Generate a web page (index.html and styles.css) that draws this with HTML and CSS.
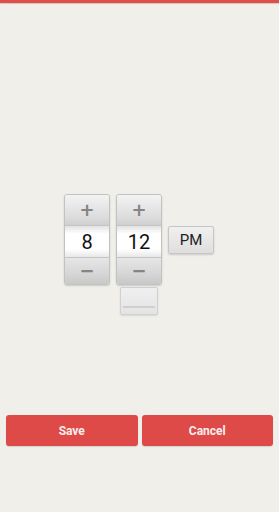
FILE: index.html
```html
<!DOCTYPE html>
<html>
<head>
    <meta charset="UTF-8">
    <meta name="viewport" content="width=device-width, initial-scale=1.0">
    <title>Set Time</title>
    <link rel="stylesheet" href="styles.css">
</head>
<body>
    <div class="top-bar"></div>

    <div class="stage">
        <div class="time-picker">
            <div class="column">
                <div class="spinner">
                    <button class="step step-up">+</button>
                    <div class="value">8</div>
                    <button class="step step-down">&minus;</button>
                </div>
            </div>
            <div class="column">
                <div class="spinner">
                    <button class="step step-up">+</button>
                    <div class="value">12</div>
                    <button class="step step-down">&minus;</button>
                </div>
                <div class="seconds"><span class="seconds-line"></span></div>
            </div>
            <div class="column column-ampm">
                <button class="ampm">PM</button>
            </div>
        </div>
    </div>

    <div class="actions">
        <button class="action">Save</button>
        <button class="action">Cancel</button>
    </div>
</body>
</html>
```

FILE: styles.css
```css
* {
    box-sizing: border-box;
    margin: 0;
    padding: 0;
}

body {
    width: 279px;
    height: 512px;
    background-color: #f0efea;
    font-family: Roboto, 'Noto Sans', sans-serif;
    overflow: hidden;
}

.top-bar {
    height: 3px;
    background-color: #d9504d;
    box-shadow: 0 1px 1px rgba(200,80,80,0.3);
}

.stage {
    height: 412px;
    padding-top: 191px;
}

.time-picker {
    display: flex;
    justify-content: center;
    align-items: flex-start;
    gap: 6px;
    padding-right: 1px;
}

.column {
    display: flex;
    flex-direction: column;
    align-items: center;
}

.column-ampm {
    padding-top: 32px;
}

.spinner {
    width: 46px;
    height: 91px;
    display: flex;
    flex-direction: column;
    border: 1px solid #c2c2c2;
    border-radius: 3px;
    background: #e8e8e8;
    box-shadow: 0 1px 2px rgba(0,0,0,0.15);
    overflow: hidden;
}

.step {
    border: none;
    font-family: 'DejaVu Sans', sans-serif;
    font-weight: bold;
    color: #858585;
    font-size: 18px;
    line-height: 1;
}

.step-up {
    height: 31px;
    background: linear-gradient(#f3f3f3, #dcdcdc 75%, #cfcfcf);
    border-bottom: 1px solid #c4c4c4;
}

.step-down {
    flex: 1;
    background: linear-gradient(#e6e6e6, #d6d6d6 60%, #c8c8c8);
    border-top: 1px solid #c4c4c4;
}

.value {
    height: 31px;
    background: linear-gradient(#e2e2e2, #ffffff 25%, #ffffff 75%, #e8e8e8);
    color: #111;
    font-size: 20px;
    display: flex;
    align-items: center;
    justify-content: center;
}

.seconds {
    width: 38px;
    height: 28px;
    margin-top: 2px;
    border: 1px solid #d0d0d0;
    border-radius: 2px;
    background: linear-gradient(#efefef, #e4e4e4);
    box-shadow: 0 1px 2px rgba(0,0,0,0.1);
    display: flex;
    align-items: flex-end;
    padding: 0 2px 6px;
}

.seconds-line {
    width: 100%;
    height: 2px;
    background-color: #cfcfcf;
}

.ampm {
    width: 46px;
    height: 28px;
    border: 1px solid #c6c6c6;
    border-radius: 2px;
    background: linear-gradient(#f0f0f0, #dedede);
    box-shadow: 0 1px 2px rgba(0,0,0,0.15);
    font-family: Roboto, sans-serif;
    font-size: 15px;
    color: #222;
}

.actions {
    display: flex;
    gap: 4px;
    padding: 0 6px;
}

.action {
    flex: 1;
    height: 31px;
    border: none;
    border-radius: 3px;
    background-color: #de4a47;
    color: #fbeeee;
    font-family: Roboto, sans-serif;
    font-weight: bold;
    font-size: 12px;
    box-shadow: 0 1px 1px rgba(0,0,0,0.12);
}
```
